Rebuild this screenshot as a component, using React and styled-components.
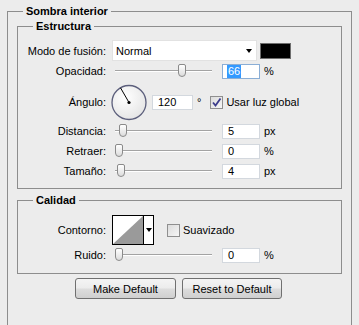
import React from "react";
import styled, { createGlobalStyle } from "styled-components";

const GlobalStyle = createGlobalStyle`
  html, body {
    margin: 0;
    padding: 0;
    background: #ececec;
  }
  body {
    font-family: "Liberation Sans", Arial, sans-serif;
    font-size: 11px;
    color: #000;
    overflow: hidden;
  }
`;

const Page = styled.div`
  width: 359px;
  height: 325px;
  box-sizing: border-box;
  padding: 5px 0 0 7px;
  overflow: hidden;
`;

const Group = styled.fieldset`
  margin: ${(p) => p.$top || 0}px 0 0 0;
  min-width: 0;
  box-sizing: border-box;
  width: ${(p) => p.$width}px;
  border: 1px solid #8d8d8d;
  padding: 0 ${(p) => p.$padX || 0}px ${(p) => p.$padBottom || 0}px;
`;

const Legend = styled.legend`
  margin-left: ${(p) => p.$indent}px;
  padding: 0 3px;
  font-weight: bold;
  line-height: 13px;
  height: 13px;
`;

const Row = styled.div`
  display: flex;
  align-items: center;
  height: ${(p) => p.$h || 20}px;
  margin-top: ${(p) => p.$mt || 0}px;
`;

const Label = styled.div`
  flex: none;
  width: 88px;
  margin-right: ${(p) => p.$gap ?? 6}px;
  text-align: right;
  white-space: nowrap;
`;

const Select = styled.div`
  box-sizing: border-box;
  width: 145px;
  height: 21px;
  background: #fff;
  border: 1px solid #e2e2e2;
  display: flex;
  align-items: center;
  justify-content: space-between;
  padding: 0 4px 0 3px;
`;

const Arrow = styled.span`
  width: 0;
  height: 0;
  border-left: 3.5px solid transparent;
  border-right: 3.5px solid transparent;
  border-top: 4px solid #000;
`;

const Swatch = styled.div`
  box-sizing: border-box;
  width: 31px;
  height: 16px;
  margin-left: 3px;
  background: #000;
  border: 1px solid #6e6e6e;
`;

const SliderBox = styled.div`
  position: relative;
  width: 100px;
  height: 20px;
  flex: none;
`;

const Track = styled.div`
  position: absolute;
  left: 3px;
  right: 0;
  top: 9px;
  height: 1px;
  background: #a3a3a3;
  border-bottom: 1px solid #fff;
`;

const Thumb = styled.div`
  position: absolute;
  top: 3px;
  box-sizing: border-box;
  width: 8px;
  height: 13px;
  border: 1px solid #8a8a8a;
  border-radius: 2px 2px 4px 4px;
  background: linear-gradient(#ffffff, #dcdcdc);
`;

const Field = styled.div`
  box-sizing: border-box;
  flex: none;
  width: ${(p) => p.$w || 38}px;
  height: 15px;
  margin-left: ${(p) => p.$ml ?? 10}px;
  background: #fff;
  border: 1px solid ${(p) => (p.$focused ? "#8aaed6" : "#d3d8de")};
  display: flex;
  align-items: center;
  padding-left: 5px;
  line-height: 13px;
`;

const Selected = styled.span`
  background: #3399ff;
  color: #fff;
  padding: 0 1px;
  margin-left: -1px;
`;

const Unit = styled.span`
  margin-left: ${(p) => p.$ml ?? 4}px;
`;

const Check = styled.div`
  box-sizing: border-box;
  flex: none;
  width: 13px;
  height: 13px;
  margin-left: ${(p) => p.$ml}px;
  border: 1px solid #8f8f8f;
  background: linear-gradient(135deg, #dcdcdc, #f6f6f6);
  display: flex;
  align-items: center;
  justify-content: center;
`;

const CheckText = styled.span`
  margin-left: 3px;
`;

const ContourBox = styled.div`
  box-sizing: border-box;
  display: flex;
  width: 42px;
  height: 30px;
  border: 1px solid #000;
  background: #fff;
`;

const ContourDrop = styled.div`
  flex: 1;
  border-left: 1px solid #000;
  display: flex;
  align-items: center;
  justify-content: center;
`;

const Buttons = styled.div`
  display: flex;
  justify-content: center;
  gap: 6px;
  margin-top: 4px;
  padding-right: 2px;
`;

const Button = styled.button`
  box-sizing: border-box;
  width: ${(p) => p.$w}px;
  height: 21px;
  padding: 0;
  font: inherit;
  color: #000;
  border: 1px solid #707070;
  border-radius: 3px;
  background: linear-gradient(#f4f4f4 0%, #ececec 48%, #dddddd 52%, #cfcfcf 100%);
`;

const Slider = ({ value }) => (
  <SliderBox>
    <Track />
    <Thumb style={{ left: 3 + value * 0.96 }} />
  </SliderBox>
);

const Dial = () => (
  <svg width="36" height="37" viewBox="0 0 36 37" style={{ flex: "none", marginTop: 1 }}>
    <defs>
      <radialGradient id="dialFill" cx="40%" cy="35%" r="70%">
        <stop offset="0%" stopColor="#ffffff" />
        <stop offset="100%" stopColor="#e4e4e4" />
      </radialGradient>
    </defs>
    <circle cx="18" cy="18.5" r="17" fill="url(#dialFill)" stroke="#5c5f7c" strokeWidth="1.3" />
    <line x1="18" y1="18.5" x2="9.5" y2="3.8" stroke="#000" strokeWidth="1" />
    <circle cx="18" cy="18.5" r="1.6" fill="#000" />
  </svg>
);

const Tick = () => (
  <svg width="11" height="11" viewBox="0 0 11 11">
    <path d="M2 5.5 L4.5 8.5 L9.5 1.5" fill="none" stroke="#3c3c8c" strokeWidth="1.8" />
  </svg>
);

const ContourCurve = () => (
  <svg width="30" height="28" viewBox="0 0 30 28" style={{ display: "block" }}>
    <polygon points="0,28 30,0 30,28" fill="#9a9a9a" />
  </svg>
);

const SliderRow = ({ label, value, field, unit, focused }) => (
  <Row>
    <Label>{label}</Label>
    <Slider value={value} />
    <Field $focused={focused}>{focused ? <Selected>{field}</Selected> : field}</Field>
    <Unit>{unit}</Unit>
  </Row>
);

export default function App() {
  return (
    <Page>
      <GlobalStyle />
      <Group $width={345} $padX={9} $padBottom={60}>
        <Legend $indent={6}>Sombra interior</Legend>

        <Group $width={325} $top={2} $padBottom={7}>
          <Legend $indent={15}>Estructura</Legend>
          <Row $h={21} $mt={7}>
            <Label>Modo de fusión:</Label>
            <Select>
              Normal
              <Arrow />
            </Select>
            <Swatch />
          </Row>
          <SliderRow label="Opacidad:" value={66} field="66" unit="%" focused />
          <Row $h={36} $mt={3}>
            <Label $gap={5}>Ángulo:</Label>
            <Dial />
            <Field $w={41} $ml={5}>120</Field>
            <Unit $ml={4}>°</Unit>
            <Check $ml={9}>
              <Tick />
            </Check>
            <CheckText>Usar luz global</CheckText>
          </Row>
          <Row $mt={1}>
            <Label>Distancia:</Label>
            <Slider value={4} />
            <Field>5</Field>
            <Unit>px</Unit>
          </Row>
          <SliderRow label="Retraer:" value={0} field="0" unit="%" />
          <SliderRow label="Tamaño:" value={2.5} field="4" unit="px" />
        </Group>

        <Group $width={325} $top={5} $padBottom={8}>
          <Legend $indent={15}>Calidad</Legend>
          <Row $h={30} $mt={8}>
            <Label>Contorno:</Label>
            <ContourBox>
              <ContourCurve />
              <ContourDrop>
                <Arrow />
              </ContourDrop>
            </ContourBox>
            <Check $ml={13} />
            <CheckText>Suavizado</CheckText>
          </Row>
          <SliderRow label="Ruido:" value={0} field="0" unit="%" />
        </Group>

        <Buttons>
          <Button $w={101}>Make Default</Button>
          <Button $w={100}>Reset to Default</Button>
        </Buttons>
      </Group>
    </Page>
  );
}
